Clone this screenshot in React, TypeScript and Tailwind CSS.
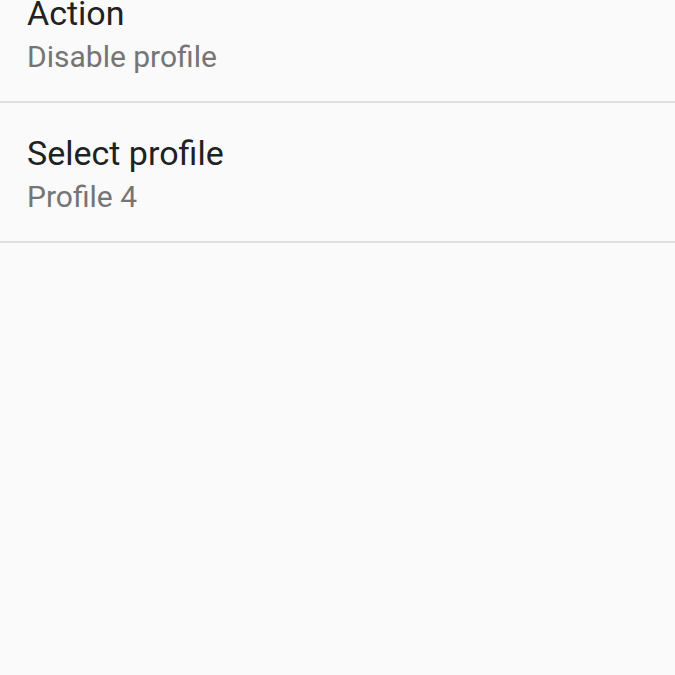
import React from "react";

const rows = [
  { title: "Action", sub: "Disable profile" },
  { title: "Select profile", sub: "Profile 4" },
];

export default function App() {
  return (
    <div className="w-[675px] h-[675px] overflow-hidden bg-[#fafafa]" style={{ fontFamily: "Roboto, sans-serif" }}>
      <div className="-mt-[37px] flex flex-col">
        {rows.map((r) => (
          <div key={r.title} className="border-b-2 border-[#e0e0e0] pl-[27px] pt-[30px] pb-[26px] flex flex-col gap-[6px]">
            <div className="text-[34px] leading-[40px] text-[#212121]">{r.title}</div>
            <div className="text-[30px] leading-[36px] text-[#757575]">{r.sub}</div>
          </div>
        ))}
      </div>
    </div>
  );
}
